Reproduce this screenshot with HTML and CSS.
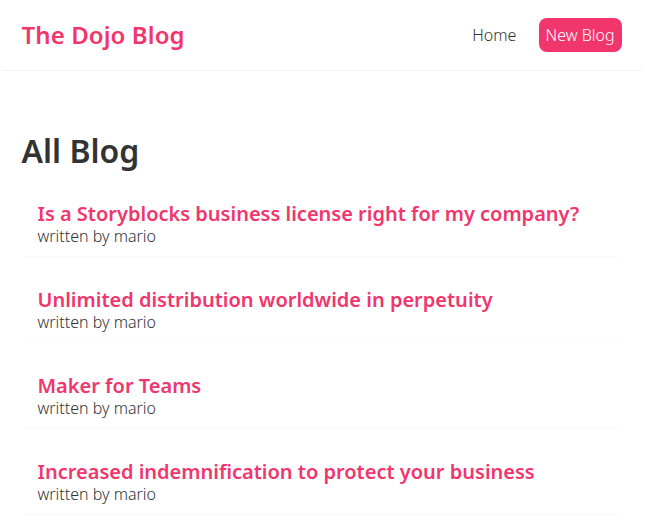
FILE: index.html
```
<!DOCTYPE html>
<html lang="en">
<head>
<meta charset="utf-8">
<title>The Dojo Blog</title>
<link rel="stylesheet" href="styles.css">
</head>
<body>
<div class="app">
  <nav class="navbar">
    <h1 class="brand">The Dojo Blog</h1>
    <div class="links">
      <a href="#" class="link">Home</a>
      <a href="#" class="link link-primary">New Blog</a>
    </div>
  </nav>
  <main class="content">
    <h2 class="page-title">All Blog</h2>
    <div class="blog-list">
      <div class="blog-preview">
        <h2 class="blog-title">Is a Storyblocks business license right for my company?</h2>
        <p class="blog-author">written by mario</p>
      </div>
      <div class="blog-preview">
        <h2 class="blog-title">Unlimited distribution worldwide in perpetuity</h2>
        <p class="blog-author">written by mario</p>
      </div>
      <div class="blog-preview">
        <h2 class="blog-title">Maker for Teams</h2>
        <p class="blog-author">written by mario</p>
      </div>
      <div class="blog-preview">
        <h2 class="blog-title">Increased indemnification to protect your business</h2>
        <p class="blog-author">written by mario</p>
      </div>
    </div>
  </main>
</div>
</body>
</html>
```
FILE: styles.css
```
* {
  margin: 0;
  box-sizing: content-box;
}
body {
  margin: 0;
  background: #fff;
  font-family: "Noto Sans", sans-serif;
  color: #333;
}
.app {
  width: 643px;
}
.navbar {
  display: flex;
  align-items: center;
  max-width: 600px;
  margin: 0 auto;
  padding: 20px;
  border-bottom: 1px solid #f2f2f2;
}
.brand {
  font-size: 24px;
  line-height: 30px;
  font-weight: 600;
  color: #f1356d;
  letter-spacing: 0.1px;
}
.links {
  margin-left: auto;
  font-size: 16px;
  line-height: 20px;
}
.link {
  margin-left: 16px;
  padding: 6px;
  color: #333;
  text-decoration: none;
  font-weight: 300;
}
.link-primary {
  margin-left: 12px;
  padding: 6px 7px;
  color: #fff;
  background: #f1356d;
  border-radius: 8px;
}
.content {
  max-width: 600px;
  margin: 40px auto;
  padding: 20px;
}
.page-title {
  font-size: 32px;
  line-height: 40px;
  font-weight: 600;
  color: #333;
}
.blog-preview {
  padding: 10px 16px;
  margin: 20px 0;
  border-bottom: 1px solid #fafafa;
}
.blog-title {
  font-size: 20px;
  line-height: 25px;
  font-weight: 600;
  color: #f1356d;
}
.blog-author {
  font-size: 16px;
  line-height: 20px;
  color: #333;
  font-weight: 300;
}
```
